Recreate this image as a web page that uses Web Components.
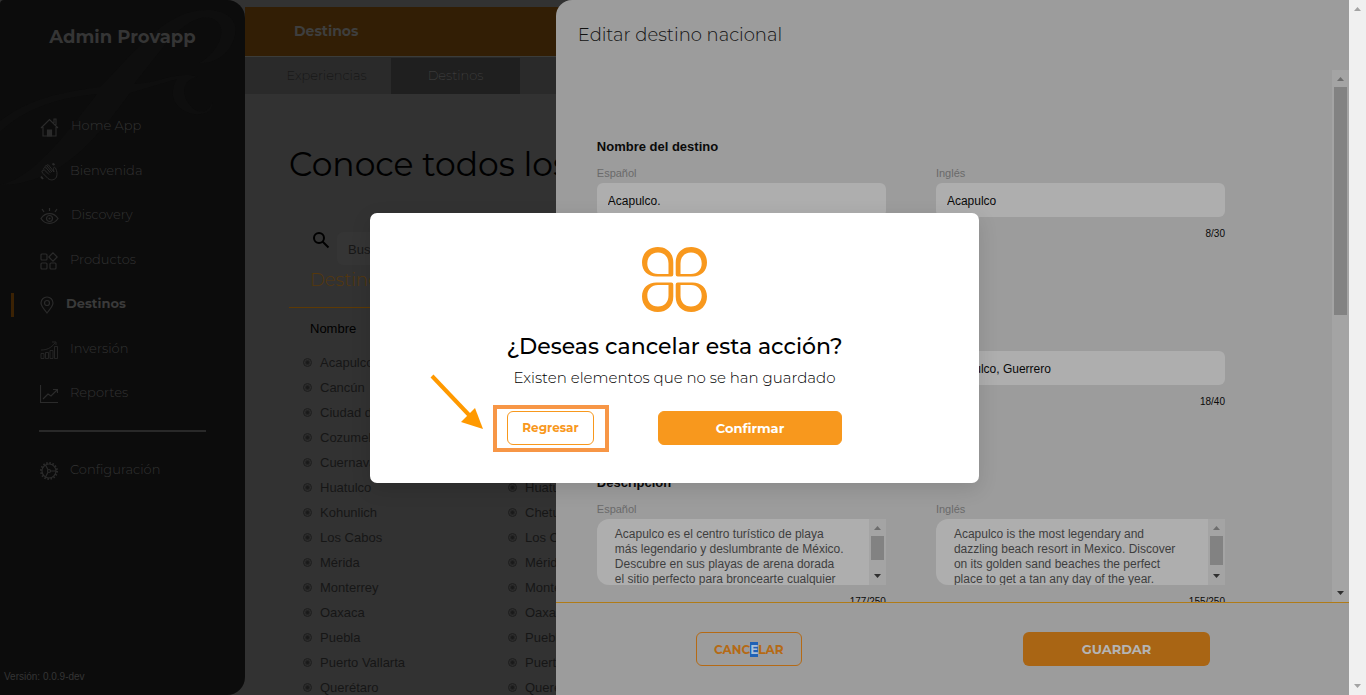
<!DOCTYPE html>
<html lang="es">
<head>
<meta charset="utf-8">
<title>Admin Provapp</title>
<style>
    body {
        margin: 0;
        background: #323232;
        font-family: Montserrat, Inter, "Open Sans", sans-serif;
    }
</style>
</head>
<body>
<admin-shell>
    <admin-sidebar slot="sidebar" version="Versión: 0.0.9-dev">
        <nav-item icon="home">Home App</nav-item>
        <nav-item icon="hand">Bienvenida</nav-item>
        <nav-item icon="eye">Discovery</nav-item>
        <nav-item icon="grid">Productos</nav-item>
        <nav-item icon="pin" active>Destinos</nav-item>
        <nav-item icon="bars">Inversión</nav-item>
        <nav-item icon="chart">Reportes</nav-item>
        <nav-item icon="gear" slot="settings">Configuración</nav-item>
    </admin-sidebar>
    <destinations-page slot="page"></destinations-page>
    <edit-drawer slot="drawer" heading="Editar destino nacional">
        <form-section heading="Nombre del destino">
            <form-field label="Español" value="Acapulco." count=""></form-field>
            <form-field label="Inglés" value="Acapulco" count="8/30"></form-field>
        </form-section>
        <form-section>
            <form-field aria-label="Español" value="Acapulco." count=""></form-field>
            <form-field aria-label="Inglés" value="Acapulco, Guerrero" count="18/40"></form-field>
        </form-section>
        <form-section heading="Descripción">
            <form-field multiline thumb="24" label="Español" count="177/250" value="Acapulco es el centro turístico de playa
más legendario y deslumbrante de México.
Descubre en sus playas de arena dorada
el sitio perfecto para broncearte cualquier"></form-field>
            <form-field multiline thumb="29" label="Inglés" count="155/250" value="Acapulco is the most legendary and
dazzling beach resort in Mexico. Discover
on its golden sand beaches the perfect
place to get a tan any day of the year."></form-field>
        </form-section>
    </edit-drawer>
    <confirm-dialog slot="dialog">
        <span slot="title">¿Deseas cancelar esta acción?</span>
        <span slot="message">Existen elementos que no se han guardado</span>
    </confirm-dialog>
</admin-shell>

<script>
const ICONS = {
    home: [19, 19, '<path d="M1 10 9.500 1.500 18 10M3 9v9h13V9M14 5V1h2v6"/><path d="M7.500 18v-6h4v6z" fill="currentColor"/>'],
    hand: [18, 19, '<path d="M3 11.500 8 16.500c3 2.500 7 1.500 8.500-1.500 1-3 .5-6-1-9-1-1.500-2.500-.5-2 1.500l.5 2.500L8.500 3c-1-1-2 0-1.500 1l5 6M7 4C6 3 4.500 4 5.500 5l5 6M5.500 6c-1-1-2.500 0-1.500 1.500L9 12.500M4 8.500c-1-1-2.500 0-2 1.500l1 1.500" stroke-width="1"/><path d="M1 14.500l2 2.500M12.500 1.500l2 1.500" stroke-width="2"/>'],
    eye: [19, 18, '<path d="M1 11.500c4-6.500 13-6.500 17 0-4 6.500-13 6.500-17 0zM9.500 1v3M2 2l2 3M17 2l-2 3"/><circle cx="9.500" cy="11.500" r="3"/><circle cx="9.500" cy="11.500" r=".5"/>'],
    grid: [18, 18, '<rect x="1" y="2" width="6" height="6" rx="1"/><rect x="1" y="11" width="6" height="6" rx="1"/><rect x="10" y="11" width="6" height="6" rx="1"/><path d="M13 .8 17.200 5 13 9.200 8.800 5z"/>'],
    pin: [14, 18, '<path d="M7 17C4 13 1 10 1 7a6 6 0 0 1 12 0c0 3-3 6-6 10z"/><circle cx="7" cy="7" r="2.500"/>'],
    bars: [18, 18, '<path d="M1 17.500v-5h3v5zM5.500 17.500v-6h3v6zM10 17.500v-8h3v8zM14.500 17.500V5.500h3v12zM1 9c6 0 10-2 14-7M12 1h4v3" stroke-width=".8"/>'],
    chart: [18, 18, '<path d="M.5 0v17.500H18M3 14l5-5 3 2 6-6M13 4.500h4.500V8"/>'],
    gear: [18, 18, '<circle cx="9" cy="9" r="7"/><circle cx="9" cy="9" r="8" stroke-dasharray="1.500 1.650" stroke-width="2"/><circle cx="9" cy="9" r="1.500"/><path d="M10.500 9H16M8 7.800 5.500 3M8 10.200 5.500 15"/>']
};

class BaseElement extends HTMLElement {
    constructor() {
        super();
        this._shadowRoot = this.attachShadow({mode: 'open'});
    }
    connectedCallback() {
        this._shadowRoot.innerHTML = this.template();
    }
    attr(name) {
        return this.getAttribute(name) || '';
    }
}

class AdminShell extends BaseElement {
    template() {
        return `<style>
                :host {
                    display: flex;
                    height: 100vh;
                    overflow: hidden;
                }
                .app {
                    flex: 1;
                    min-width: 0;
                    display: flex;
                    position: relative;
                    overflow: hidden;
                }
                slot[name="page"]::slotted(*) {
                    flex: 1;
                    min-width: 0;
                }
                slot[name="drawer"]::slotted(*) {
                    position: absolute;
                    top: 0;
                    right: 0;
                    bottom: 0;
                    width: 58.8%;
                }
                slot[name="dialog"]::slotted(*) {
                    position: absolute;
                    inset: 0;
                }
                scroll-bar {
                    --track: #f0f0f0;
                    --up: #a3a3a3;
                    --down: #a3a3a3;
                }
            </style>
            <div class="app">
                <slot name="sidebar"></slot>
                <slot name="page"></slot>
                <slot name="drawer"></slot>
                <slot name="dialog"></slot>
            </div>
            <scroll-bar></scroll-bar>`;
    }
}

class ScrollBar extends BaseElement {
    template() {
        return `<style>
                :host {
                    display: flex;
                    flex-direction: column;
                    flex: none;
                    width: 17px;
                    background: var(--track, #a4a4a4);
                }
                svg {
                    display: block;
                    flex: none;
                }
                .lane {
                    flex: 1;
                    padding: 0 2px;
                }
                .thumb {
                    background: #828282;
                }
            </style>
            <svg width="17" height="17"><path d="M5 11h7L8.500 7z" fill="var(--up, #6d6d6d)"/></svg>
            <div class="lane"><div class="thumb" style="height: ${this.attr('thumb') || 0}px"></div></div>
            <svg width="17" height="17"><path d="M5 6h7l-3.500 4z" fill="var(--down, #303030)"/></svg>`;
    }
}

class NavItem extends BaseElement {
    template() {
        const [w, h, shape] = ICONS[this.attr('icon')];
        return `<style>
                :host {
                    display: block;
                    color: #333;
                    font-size: 13px;
                    font-weight: 300;
                }
                :host([active]) {
                    color: #3a3a3a;
                    font-weight: 700;
                }
                a {
                    display: flex;
                    align-items: center;
                    gap: 12px;
                    height: 24px;
                    padding-left: 40px;
                    color: inherit;
                    text-decoration: none;
                }
                :host([active]) a {
                    margin-left: 11px;
                    padding-left: 26px;
                    border-left: 3px solid #3b2204;
                }
                svg {
                    flex: none;
                    color: #2b2b2b;
                }
                span {
                    padding-bottom: 4px;
                }
            </style>
            <a href="#"><svg width="${w}" height="${h}" fill="none" stroke="currentColor" stroke-width="1.2">${shape}</svg><span><slot></slot></span></a>`;
    }
}

class AdminSidebar extends BaseElement {
    template() {
        return `<style>
                :host {
                    display: flex;
                    flex-direction: column;
                    flex: none;
                    width: 245px;
                    position: relative;
                    overflow: hidden;
                    border-radius: 4px 18px 18px 0;
                    background: #0c0c0c;
                }
                .flourish {
                    position: absolute;
                    top: 0;
                    left: 0;
                }
                h1 {
                    position: relative;
                    margin: 25px 0 0;
                    font-size: 18px;
                    line-height: 24px;
                    font-weight: 700;
                    text-align: center;
                    color: #353535;
                }
                nav {
                    position: relative;
                }
                .items {
                    display: flex;
                    flex-direction: column;
                    justify-content: space-between;
                    min-height: 291px;
                    margin-top: 66px;
                }
                hr {
                    margin: 24px 39px 27px;
                    border: 0;
                    border-top: 2px solid #292929;
                }
                footer {
                    margin-top: auto;
                    padding: 0 4px 11px;
                    font: 10px/14px "Liberation Sans", sans-serif;
                    color: #353535;
                }
            </style>
            <svg class="flourish" width="245" height="200" fill="#0e0e0e">
                <path d="M0 121C30 98 62 92 100 87C125 63 151 27 184 14C213 4 240 13 235 35C231 53 216 64 199 63C215 55 225 36 220 25C207 7 181 25 164 46L134 84C158 84 176 70 198 77C183 79 180 93 190 105C198 116 210 112 212 102C215 116 193 117 183 110C169 101 172 87 177 79L130 93C101 132 63 185 0 185C37 177 73 124 97 94C62 97 26 107 0 132z"/>
            </svg>
            <h1>Admin Provapp</h1>
            <nav>
                <div class="items"><slot></slot></div>
                <hr>
                <slot name="settings"></slot>
            </nav>
            <footer>${this.attr('version')}</footer>`;
    }
}

class DestinationList extends BaseElement {
    template() {
        const items = this.attr('items').split(',');
        return `<style>
                :host {
                    display: block;
                    width: 205px;
                    flex: none;
                }
                ul {
                    margin: 0;
                    padding: 0;
                    list-style: none;
                    font: 13px/25px "Liberation Sans", sans-serif;
                    color: #161616;
                }
                li {
                    display: flex;
                    align-items: center;
                    gap: 8px;
                    min-height: 25px;
                }
                li::before {
                    content: "";
                    box-sizing: border-box;
                    width: 9px;
                    height: 9px;
                    border: 1px solid #1d1d1d;
                    border-radius: 50%;
                    background: radial-gradient(#1a1a1a 1px, #2d2d2d 3px);
                }
            </style>
            <ul>${items.map(item => `<li>${item}</li>`).join('')}</ul>`;
    }
}

class DestinationsPage extends BaseElement {
    template() {
        return `<style>
                :host {
                    display: block;
                    overflow: hidden;
                    white-space: nowrap;
                }
                header {
                    margin-top: 7px;
                    padding-left: 49px;
                    border-bottom: 1px solid #3b3c3a;
                    background: #321e05;
                    color: #3e3e3e;
                    font-size: 14px;
                    line-height: 49px;
                    font-weight: 700;
                }
                .tabs {
                    display: flex;
                    padding: 1px 0 0 17px;
                    background: #2a2a2a;
                }
                .tabs a {
                    width: 129px;
                    font-size: 13px;
                    font-weight: 200;
                    line-height: 35px;
                    padding-bottom: 1px;
                    text-align: center;
                    text-decoration: none;
                    color: #111;
                }
                .tabs a[aria-current] {
                    background: #1f1f1f;
                    color: #444;
                }
                h2 {
                    margin: 50px 0 0 44px;
                    font-size: 33px;
                    line-height: 40px;
                    font-weight: 400;
                    color: #000;
                }
                .search {
                    display: flex;
                    gap: 6px;
                    margin: 48px 0 0 67px;
                }
                input {
                    box-sizing: border-box;
                    width: 250px;
                    height: 33px;
                    padding: 2px 11px 0;
                    border: 0;
                    border-radius: 6px;
                    background: #353535;
                    color: #151515;
                    font: 13px "Liberation Sans", sans-serif;
                }
                input::placeholder {
                    color: #171717;
                }
                h3 {
                    margin: 3px 0 0 44px;
                    padding: 0 0 15px 21px;
                    border-bottom: 1px solid #5e3a04;
                    color: #56380c;
                    font-size: 18px;
                    line-height: 24px;
                    font-weight: 300;
                }
                h4 {
                    margin: 11px 0 11px 65px;
                    font: 13px/20px "Liberation Sans", sans-serif;
                    color: #000;
                }
                .lists {
                    display: flex;
                    padding-left: 58px;
                }
            </style>
            <header>Destinos</header>
            <nav class="tabs">
                <a href="#">Experiencias</a>
                <a href="#" aria-current="page">Destinos</a>
            </nav>
            <h2>Conoce todos los</h2>
            <div class="search">
                <svg width="19" height="19" fill="none" stroke="#000" stroke-width="2"><circle cx="7" cy="6" r="5"/><path d="m10.500 9.500 6 6"/></svg>
                <input type="search" aria-label="Buscar" placeholder="Buscar">
            </div>
            <h3>Destinos</h3>
            <h4>Nombre</h4>
            <div class="lists">
                <destination-list items="Acapulco,Cancún,Ciudad de México,Cozumel,Cuernavaca,Huatulco,Kohunlich,Los Cabos,Mérida,Monterrey,Oaxaca,Puebla,Puerto Vallarta,Querétaro"></destination-list>
                <destination-list items=",,,,,Huatulco,Chetumal,Los Cabos,Mérida,Monterrey,Oaxaca,Puebla,Puerto,Querétaro"></destination-list>
            </div>`;
    }
}

class FormField extends BaseElement {
    template() {
        const name = this.attr('aria-label');
        const label = name ? `aria-label="${name}"` : '';
        const control = this.hasAttribute('multiline')
            ? `<div class="area"><textarea id="control" ${label}>${this.attr('value')}</textarea><scroll-bar thumb="${this.attr('thumb')}"></scroll-bar></div>`
            : `<input id="control" type="text" ${label} value="${this.attr('value')}">`;
        return `<style>
                :host {
                    display: block;
                    font: 13px "Liberation Sans", sans-serif;
                }
                label {
                    display: block;
                    min-height: 16px;
                    margin-bottom: 2px;
                    font-size: 11px;
                    line-height: 16px;
                    color: #6a6a6a;
                }
                input, textarea {
                    box-sizing: border-box;
                    display: block;
                    width: 100%;
                    border: 0;
                    background: #aeaeae;
                    font: inherit;
                    color: #0a0a0a;
                }
                input {
                    height: 34px;
                    padding: 2px 11px 0;
                    border-radius: 6px;
                    font-size: 12px;
                }
                .area {
                    display: flex;
                    height: 66px;
                }
                textarea {
                    flex: 1;
                    min-width: 0;
                    padding: 8px 0 0 18px;
                    border-radius: 12px 0 0 12px;
                    line-height: 15px;
                    font-size: 12px;
                    color: #3e3e3e;
                    resize: none;
                    overflow: hidden;
                    white-space: pre;
                }
                output {
                    display: block;
                    min-height: 14px;
                    margin-top: 10px;
                    font-size: 10px;
                    line-height: 14px;
                    text-align: right;
                    color: #0a0a0a;
                }
            </style>
            <label for="control">${this.attr('label')}</label>
            ${control}
            <output for="control">${this.attr('count')}</output>`;
    }
}

class FormSection extends BaseElement {
    template() {
        return `<style>
                :host {
                    display: block;
                    margin-bottom: 64px;
                }
                h3 {
                    min-height: 20px;
                    margin: 0 0 8px;
                    font: bold 13px/20px "Liberation Sans", sans-serif;
                    color: #0a0a0a;
                }
                .fields {
                    display: grid;
                    grid-template-columns: 1fr 1fr;
                    gap: 50px;
                }
            </style>
            <h3>${this.attr('heading')}</h3>
            <div class="fields"><slot></slot></div>`;
    }
}

class EditDrawer extends BaseElement {
    template() {
        return `<style>
                :host {
                    display: flex;
                    flex-direction: column;
                    overflow: hidden;
                    border-radius: 16px 0 0 0;
                    background: #9c9c9c;
                }
                h2 {
                    margin: 0;
                    padding: 23px 22px;
                    font-size: 18px;
                    line-height: 24px;
                    font-weight: 300;
                    color: #111;
                }
                .body {
                    flex: 1;
                    min-height: 0;
                    display: flex;
                }
                form {
                    flex: 1;
                    overflow: hidden;
                    padding: 67px 107px 0 41px;
                }
                footer {
                    display: flex;
                    justify-content: space-between;
                    padding: 29px 139px 29px 140px;
                    border-top: 1px solid #b07b17;
                }
                button {
                    height: 34px;
                    padding: 0 17px;
                    border: 1px solid #b56a15;
                    border-radius: 6px;
                    background: none;
                    color: #b56a15;
                    font: 700 12px Montserrat, Inter, sans-serif;
                }
                .cancel {
                    min-width: 106px;
                }
                .save {
                    width: 187px;
                    border: 0;
                    background: #a96514;
                    color: #b4b4b4;
                    font-size: 13px;
                }
                mark {
                    background: #1f62b6;
                    color: #a9bfd9;
                }
            </style>
            <h2>${this.attr('heading')}</h2>
            <div class="body">
                <form><slot></slot></form>
                <scroll-bar thumb="228"></scroll-bar>
            </div>
            <footer>
                <button type="button" class="cancel">CANC<mark>E</mark>LAR</button>
                <button type="button" class="save">GUARDAR</button>
            </footer>`;
    }
}

class ConfirmDialog extends BaseElement {
    template() {
        return `<style>
                :host {
                    display: flex;
                    align-items: center;
                    justify-content: center;
                }
                .dialog {
                    box-sizing: border-box;
                    width: 609px;
                    max-width: 100%;
                    display: flex;
                    flex-direction: column;
                    align-items: center;
                    padding: 34px 24px 38px;
                    border-radius: 7px;
                    background: #fff;
                    box-shadow: 0 6px 20px rgba(0, 0, 0, .12);
                }
                h2 {
                    margin: 21px 0 0;
                    font-size: 22px;
                    line-height: 28px;
                    font-weight: 500;
                    color: #000;
                }
                p {
                    margin: 7px 0 23px;
                    font-size: 15px;
                    line-height: 20px;
                    font-weight: 300;
                    color: #000;
                }
                .actions {
                    display: flex;
                    gap: 64px;
                    position: relative;
                }
                button {
                    height: 34px;
                    border: 1px solid #f8981d;
                    border-radius: 6px;
                    font: 700 13px Montserrat, Inter, sans-serif;
                }
                .back {
                    width: 87px;
                    padding: 0;
                    background: #fff;
                    color: #f8981d;
                    font-size: 12px;
                }
                .confirm {
                    width: 184px;
                    background: #f8981d;
                    color: #fff;
                }
                .focus {
                    position: absolute;
                    box-sizing: border-box;
                    top: -6px;
                    left: -14px;
                    width: 116px;
                    height: 47px;
                    border: 4px solid #f79646;
                    pointer-events: none;
                }
                .arrow {
                    position: absolute;
                    top: -37px;
                    left: -78px;
                }
            </style>
            <div class="dialog" role="dialog" aria-labelledby="title">
                <svg width="65" height="65" viewBox="0 0 65 65">
                    <defs><path id="petal" fill="#f8981d" fill-rule="evenodd" d="M31.300 27.500V15.500C31.300 6 25 0 15.700 0S0 6.500 0 15.500C0 24 6 29.500 14.500 29.500H29.300q2 0 2-2zM26.500 27H16C9.500 27 5.300 22.500 5.300 16.500C5.300 10 9.500 5.500 16 5.500C22.500 5.500 26.500 10 26.500 16.500z"/></defs>
                    <use href="#petal"/>
                    <use href="#petal" transform="matrix(-1 0 0 1 65 0)"/>
                    <use href="#petal" transform="matrix(1 0 0 -1 0 65)"/>
                    <use href="#petal" transform="matrix(-1 0 0 -1 65 65)"/>
                </svg>
                <h2 id="title"><slot name="title"></slot></h2>
                <p><slot name="message"></slot></p>
                <div class="actions">
                    <button type="button" class="back">Regresar</button>
                    <button type="button" class="confirm">Confirmar</button>
                    <span class="focus"></span>
                    <svg class="arrow" width="56" height="56"><path d="m3 2 38 40" stroke="#ff9900" stroke-width="4"/><path d="M54 55 32 48 46 34z" fill="#ff9900"/></svg>
                </div>
            </div>`;
    }
}

window.customElements.define('scroll-bar', ScrollBar);
window.customElements.define('nav-item', NavItem);
window.customElements.define('admin-sidebar', AdminSidebar);
window.customElements.define('destination-list', DestinationList);
window.customElements.define('destinations-page', DestinationsPage);
window.customElements.define('form-field', FormField);
window.customElements.define('form-section', FormSection);
window.customElements.define('edit-drawer', EditDrawer);
window.customElements.define('confirm-dialog', ConfirmDialog);
window.customElements.define('admin-shell', AdminShell);
</script>
</body>
</html>
